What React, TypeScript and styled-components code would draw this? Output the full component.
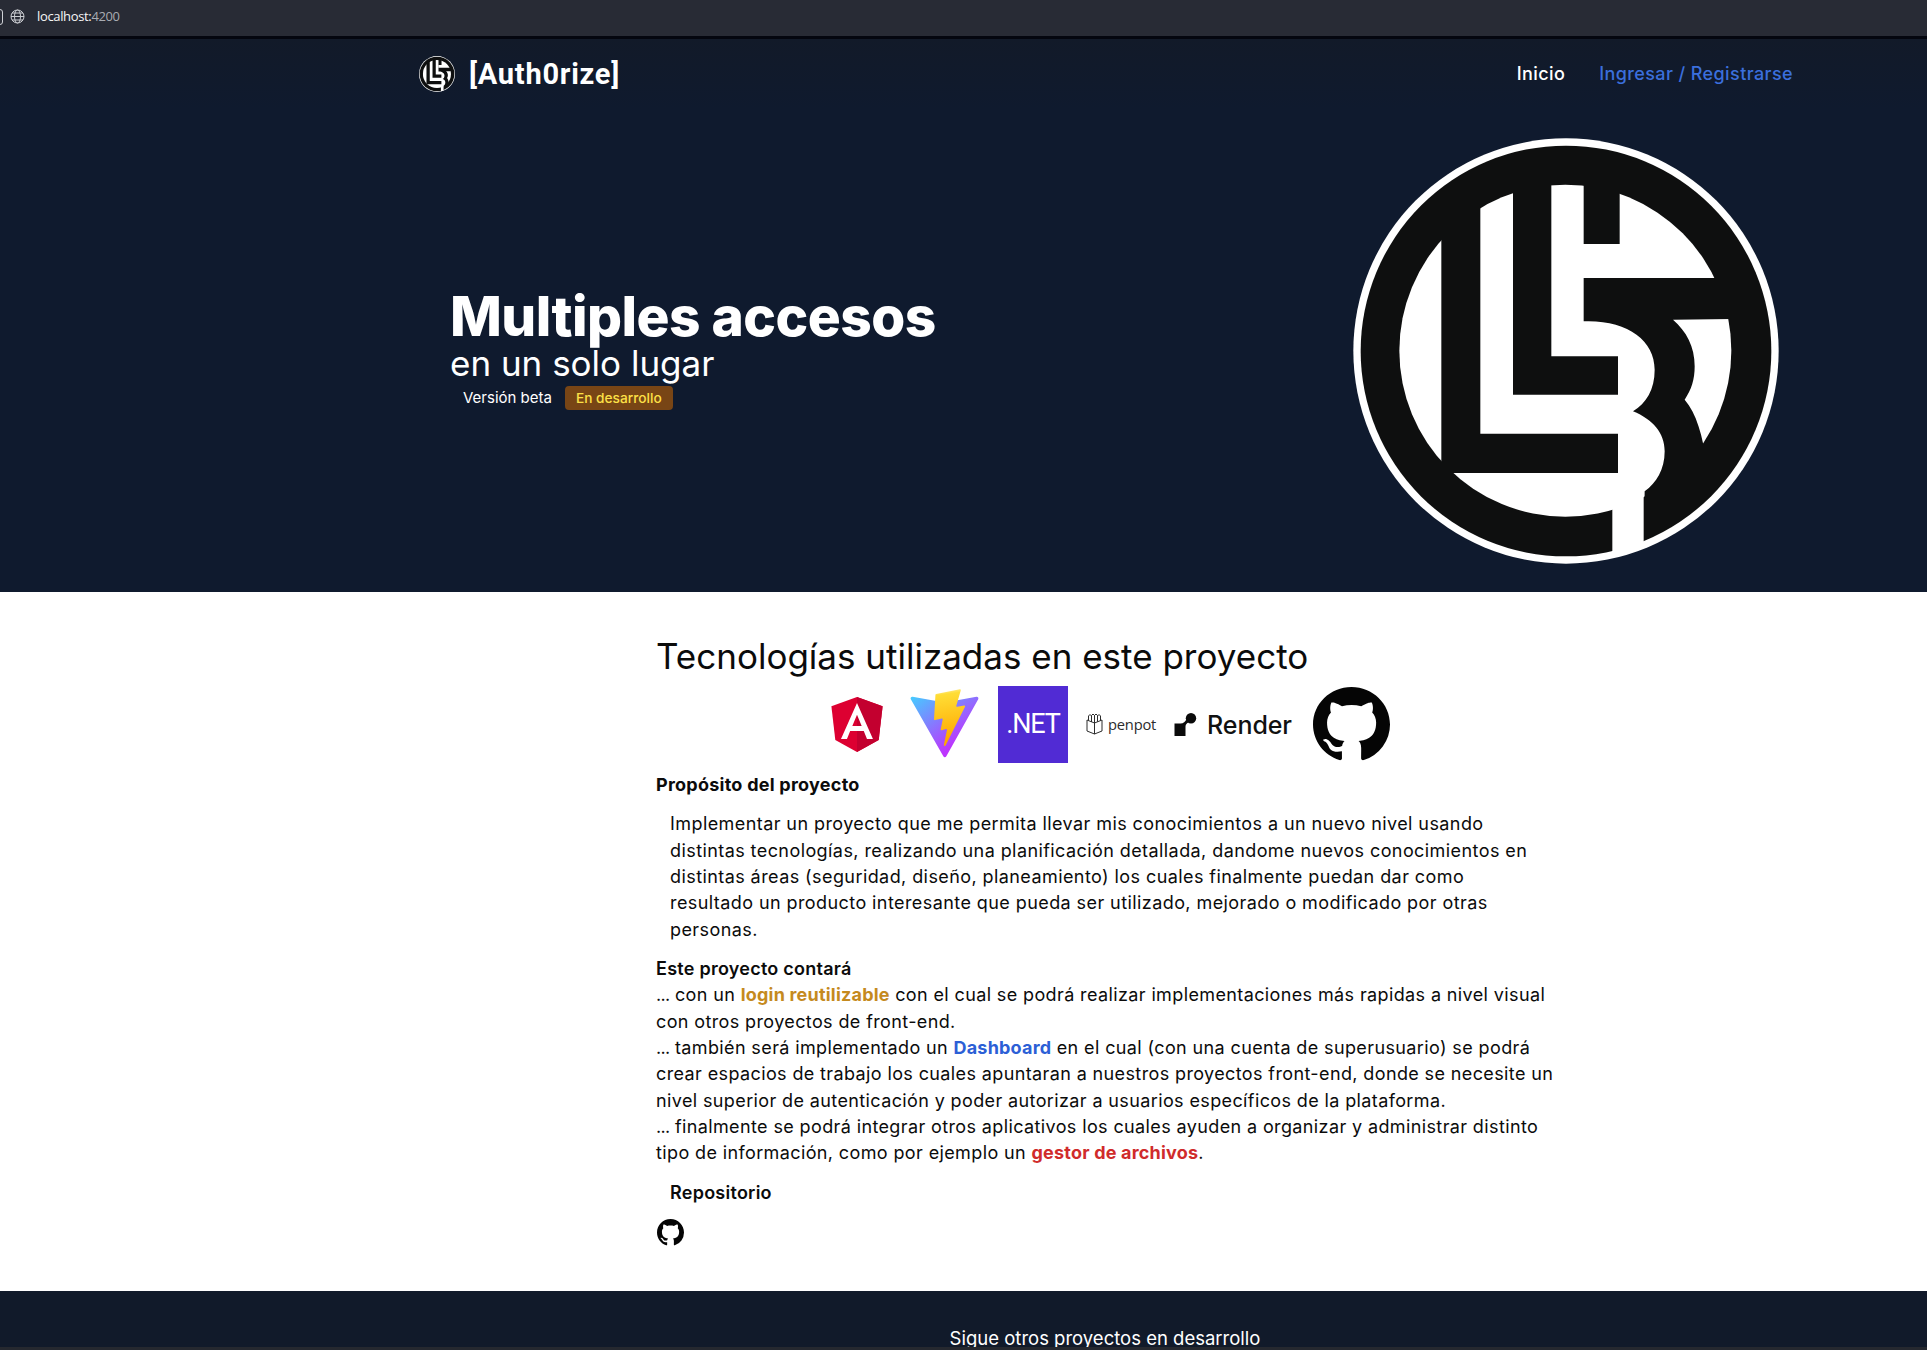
import React from "react";
import styled, { createGlobalStyle } from "styled-components";

const Global = createGlobalStyle`
  html, body { margin: 0; padding: 0; background: #fff; }
  body { font-family: Inter, "Noto Sans", "Liberation Sans", sans-serif; }
  * { box-sizing: border-box; }
`;

const Page = styled.div`
  height: 1350px;
  display: flex;
  flex-direction: column;
  overflow: hidden;
`;
const BrowserBar = styled.div`
  height: 39px;
  flex: none;
  display: flex;
  align-items: center;
  gap: 12px;
  padding: 0 0 4px 10px;
  background: #282b35;
  border-bottom: 3px solid #04060f;
  font: 400 13px "Open Sans", sans-serif;
  letter-spacing: -0.35px;
  color: #f6f6f6;
`;
const Port = styled.span`
  color: #a8abb2;
`;
const LeftEdge = styled.div`
  position: absolute;
  left: -6px;
  top: 9px;
  width: 9px;
  height: 16px;
  border: 1px solid #cfd1d6;
  border-radius: 3px;
`;
const Viewport = styled.div`
  flex: 1;
  min-height: 0;
  overflow: hidden;
`;
const Nav = styled.nav`
  height: 70px;
  background: linear-gradient(#121a29, #0f1a2e);
  display: flex;
  align-items: center;
  justify-content: space-between;
  padding: 0 134px 0 419px;
`;
const Brand = styled.div`
  display: flex;
  align-items: center;
  gap: 14px;
  color: #fff;
  font: 700 29px/1 Roboto, sans-serif;
  letter-spacing: 0.75px;
`;
const NavLinks = styled.div`
  display: flex;
  gap: 34px;
  margin-top: -2px;
`;
const NavLink = styled.a<{ $accent?: boolean }>`
  font-size: 18px;
  font-weight: 500;
  letter-spacing: 0.4px;
  color: ${(p) => (p.$accent ? "#3b6fdc" : "#ffffff")};
`;
const Hero = styled.section`
  height: 483px;
  background: #0f1a2e;
  display: flex;
  align-items: center;
  justify-content: space-between;
  padding: 0 148px 0 450px;
`;
const HeroText = styled.div`
  display: flex;
  flex-direction: column;
  margin-top: -6px;
  color: #fff;
`;
const HeroTitle = styled.h1`
  margin: 0;
  font-size: 55px;
  line-height: 60px;
  font-weight: 800;
  letter-spacing: -0.55px;
`;
const HeroSub = styled.div`
  font-size: 35px;
  line-height: 36px;
  font-weight: 400;
  letter-spacing: 0;
  margin-top: -1px;
`;
const HeroMeta = styled.div`
  display: flex;
  align-items: center;
  gap: 13px;
  padding-left: 13px;
  margin-top: 5px;
  font-size: 15px;
`;
const Badge = styled.span`
  display: inline-flex;
  align-items: center;
  height: 24px;
  padding: 0 11px;
  border-radius: 4px;
  background: #784515;
  color: #fde047;
  font-size: 13.7px;
  font-weight: 500;
`;
const Main = styled.main`
  height: 699px;
  background: #fff;
  color: #0b0b0b;
  padding: 41px 0 0 656px;
`;
const Column = styled.div`
  width: 905px;
`;
const Title = styled.h2`
  margin: 0;
  font-size: 35px;
  line-height: 46px;
  font-weight: 400;
  letter-spacing: 0;
`;
const LogoRow = styled.div`
  display: flex;
  align-items: center;
  gap: 18px;
  height: 78px;
  margin-top: 6px;
  margin-bottom: 9px;
  padding-left: 175px;
`;
const DotNet = styled.div`
  width: 70px;
  height: 77px;
  display: flex;
  align-items: center;
  justify-content: center;
  background: #512bd4;
  color: #fff;
  font: 400 27px Roboto, sans-serif;
  letter-spacing: -1.2px;
`;
const Penpot = styled.div`
  display: flex;
  align-items: center;
  gap: 5px;
  font: 400 14.7px "Open Sans", sans-serif;
  letter-spacing: -0.2px;
  color: #2c2c2c;
`;
const Render = styled.div`
  display: flex;
  align-items: center;
  gap: 10px;
  font: 500 25px Inter, sans-serif;
  letter-spacing: -0.1px;
  color: #111;
  margin-top: 1px;
`;
const GithubSlot = styled.div`
  margin-left: 3px;
  height: 75px;
`;
const Heading = styled.div<{ $indent?: boolean }>`
  font-size: 18px;
  line-height: 26.3px;
  font-weight: 700;
  letter-spacing: 0.25px;
  padding-left: ${(p) => (p.$indent ? "14px" : "0")};
`;
const Medium = styled(Heading)`
  font-weight: 600;
`;
const Para = styled.p<{ $indent?: boolean; $spacing: number; $gap?: number }>`
  margin: ${(p) => p.$gap ?? 0}px 0 0;
  font-size: 18px;
  line-height: 26.35px;
  letter-spacing: ${(p) => p.$spacing}px;
  white-space: nowrap;
  padding-left: ${(p) => (p.$indent ? "14px" : "0")};
`;
const Section = styled(Medium)<{ $gap: number }>`
  margin-top: ${(p) => p.$gap}px;
`;
const Mark = styled.b<{ $color: string }>`
  font-weight: 700;
  letter-spacing: 0.2px;
  color: ${(p) => p.$color};
`;
const Dots = styled.span`
  letter-spacing: -0.7px;
`;
const RepoIcon = styled.a`
  display: block;
  margin: 13px 0 0 1px;
  height: 27px;
`;
const Footer = styled.footer`
  height: 60px;
  background: #111a2a;
  color: #fff;
  padding: 35px 0 0 656px;
`;
const FooterText = styled.div`
  width: 898px;
  text-align: center;
  font-size: 18.5px;
  line-height: 24px;
`;
const BottomStrip = styled.div`
  height: 3px;
  flex: none;
  background: #25282f;
`;

const Logo = ({ size }: { size: number }) => (
  <svg width={size} height={size} viewBox="40 30 1278 1268" style={{ flex: "none" }}>
    <defs>
      <clipPath id={`inner${size}`}>
        <circle cx="677" cy="663" r="498" />
      </clipPath>
      <clipPath id={`outer${size}`}>
        <circle cx="679" cy="664" r="630" />
      </clipPath>
    </defs>
    <circle cx="679" cy="664" r="638" fill="#fff" />
    <circle cx="679" cy="664" r="616" fill="#0e0f0f" />
    <g clipPath={`url(#inner${size})`} fill="#fff">
      <rect x="170" y="100" width="135" height="1100" />
      <path d="M422 100H520V795H835V680H635V100H732V575C860 570 945 630 945 720C945 780 920 820 880 845C940 870 975 910 975 965C975 1020 950 1060 915 1085L912 1320H818V1200H300V1030H835V912H422Z" />
      <path d="M840 100V343H728V445H1300V100Z" />
      <path d="M1000 570L1300 567V1000H1100C1090 920 1070 850 1035 810C1055 780 1065 750 1065 710C1065 650 1040 605 1000 570Z" />
    </g>
    <rect x="818" y="1085" width="94" height="230" fill="#fff" clipPath={`url(#outer${size})`} />
  </svg>
);

const GithubMark = ({ w, h }: { w: number; h: number }) => (
  <svg width={w} height={h} viewBox="0 0 16 16" preserveAspectRatio="none" fill="#050505">
    <path d="M8 0C3.58 0 0 3.58 0 8c0 3.54 2.29 6.53 5.47 7.59.4.07.55-.17.55-.38 0-.19-.01-.82-.01-1.49-2.01.37-2.53-.49-2.69-.94-.09-.23-.48-.94-.82-1.13-.28-.15-.68-.52-.01-.53.63-.01 1.08.58 1.23.82.72 1.21 1.87.87 2.33.66.07-.52.28-.87.51-1.07-1.78-.2-3.64-.89-3.64-3.95 0-.87.31-1.59.82-2.15-.08-.2-.36-1.02.08-2.12 0 0 .67-.21 2.2.82.64-.18 1.32-.27 2-.27.68 0 1.36.09 2 .27 1.53-1.04 2.2-.82 2.2-.82.44 1.1.16 1.92.08 2.12.51.56.82 1.27.82 2.15 0 3.07-1.87 3.75-3.65 3.95.29.25.54.73.54 1.48 0 1.07-.01 1.93-.01 2.2 0 .21.15.46.55.38A8.013 8.013 0 0016 8c0-4.42-3.58-8-8-8z" />
  </svg>
);

const AngularSvg = styled.svg`
  margin-right: 8px;
`;
const Angular = () => (
  <AngularSvg width="52" height="55" viewBox="31 30 188 200">
    <polygon points="125,30 31.9,63.2 46.1,186.3 125,230 203.9,186.3 218.1,63.2" fill="#DD0031" />
    <polygon points="125,30 125,230 203.9,186.3 218.1,63.2" fill="#C3002F" />
    <path
      d="M125 52.1L66.8 182.6h21.7l11.7-29.2h49.4l11.7 29.2h21.7L125 52.1zM142 135.4H108l17-40.9L142 135.4z"
      fill="#fff"
    />
  </AngularSvg>
);

const Vite = () => (
  <svg width="71" height="70" viewBox="0 0 410 404">
    <defs>
      <linearGradient id="va" x1="6" y1="33" x2="235" y2="344" gradientUnits="userSpaceOnUse">
        <stop stopColor="#41D1FF" />
        <stop offset="1" stopColor="#BD34FE" />
      </linearGradient>
      <linearGradient id="vb" x1="194.651" y1="8.818" x2="236.076" y2="292.989" gradientUnits="userSpaceOnUse">
        <stop stopColor="#FFEA83" />
        <stop offset="0.0833" stopColor="#FFDD35" />
        <stop offset="1" stopColor="#FFA800" />
      </linearGradient>
    </defs>
    <path
      d="M399.641 59.5246L215.643 388.545C211.844 395.338 202.084 395.378 198.228 388.618L10.5817 59.5563C6.38087 52.1896 12.6802 43.2665 21.0281 44.7586L205.223 77.6824C206.398 77.8924 207.601 77.8904 208.776 77.6763L389.119 44.8058C397.439 43.2894 403.768 52.1434 399.641 59.5246Z"
      fill="url(#va)"
    />
    <path
      d="M292.965 1.5744L156.801 28.2552C154.563 28.6937 152.906 30.5903 152.771 32.8664L144.395 174.33C144.198 177.662 147.258 180.248 150.51 179.498L188.42 170.749C191.967 169.931 195.172 173.055 194.443 176.622L183.18 231.775C182.422 235.487 185.907 238.661 189.532 237.56L212.947 230.446C216.577 229.344 220.065 232.527 219.297 236.242L201.398 322.875C200.278 328.294 207.486 331.249 210.492 326.603L212.5 323.5L323.454 102.072C325.312 98.3645 322.108 94.137 318.036 94.9228L279.014 102.454C275.347 103.161 272.227 99.746 273.262 96.1583L298.731 7.86689C299.767 4.27314 296.636 0.855181 292.965 1.5744Z"
      fill="url(#vb)"
    />
  </svg>
);

const PenpotBox = () => (
  <svg width="17" height="22" viewBox="0 0 17 22" fill="none" stroke="#2c2c2c" strokeWidth="1">
    <path d="M1 7L8.5 10V21L1 18ZM16 7L8.5 10V21L16 18Z" />
    <path d="M2.5 7.5V3L4 1.5L5.5 3V9M5.5 8.5V2.5L7 1L8.5 2.5V10M8.5 10V2.5L10 1L11.5 2.5V8.5M11.5 8.5V3L13 1.5L14.5 3V7.5" />
  </svg>
);

const RenderMark = () => (
  <svg width="23" height="23" viewBox="0 0 22 23" fill="#0a0a0a">
    <circle cx="16.5" cy="5.2" r="5.2" />
    <path d="M0 10.5H6C9 10.5 10.8 8.8 11.8 6.5L14 9.5C12.5 10 11 11.5 11 13.5V23H0Z" />
  </svg>
);

const Globe = () => (
  <svg width="15" height="15" viewBox="0 0 15 15" fill="none" stroke="#c9cbd0" strokeWidth="1">
    <circle cx="7.5" cy="7.5" r="6.5" />
    <ellipse cx="7.5" cy="7.5" rx="3" ry="6.5" />
    <path d="M1 7.5H14M2 4H13M2 11H13" />
  </svg>
);

export default function App() {
  return (
    <Page>
      <Global />
      <BrowserBar>
        <LeftEdge />
        <Globe />
        <span>
          localhost:<Port>4200</Port>
        </span>
      </BrowserBar>
      <Viewport>
        <Nav>
          <Brand>
            <Logo size={36} />
            [Auth0rize]
          </Brand>
          <NavLinks>
            <NavLink>Inicio</NavLink>
            <NavLink $accent>Ingresar / Registrarse</NavLink>
          </NavLinks>
        </Nav>
        <Hero>
          <HeroText>
            <HeroTitle>Multiples accesos</HeroTitle>
            <HeroSub>en un solo lugar</HeroSub>
            <HeroMeta>
              Versión beta
              <Badge>En desarrollo</Badge>
            </HeroMeta>
          </HeroText>
          <Logo size={426} />
        </Hero>
        <Main>
          <Column>
            <Title>Tecnologías utilizadas en este proyecto</Title>
            <LogoRow>
              <Angular />
              <Vite />
              <DotNet>.NET</DotNet>
              <Penpot>
                <PenpotBox />
                penpot
              </Penpot>
              <Render>
                <RenderMark />
                Render
              </Render>
              <GithubSlot>
                <GithubMark w={77} h={75} />
              </GithubSlot>
            </LogoRow>
            <Heading>Propósito del proyecto</Heading>
            <Para $indent $spacing={0.42} $gap={13}>
              Implementar un proyecto que me permita llevar mis conocimientos a un nuevo nivel usando
              <br />
              distintas tecnologías, realizando una planificación detallada, dandome nuevos conocimientos en
              <br />
              distintas áreas (seguridad, diseño, planeamiento) los cuales finalmente puedan dar como
              <br />
              resultado un producto interesante que pueda ser utilizado, mejorado o modificado por otras
              <br />
              personas.
            </Para>
            <Section $gap={13}>Este proyecto contará</Section>
            <Para $spacing={0.38}>
              <Dots>...</Dots> con un <Mark $color="#c58a1e">login reutilizable</Mark> con el cual se podrá realizar implementaciones más rapidas a nivel visual
              <br />
              con otros proyectos de front-end.
              <br />
              <Dots>...</Dots> también será implementado un <Mark $color="#2c5fd6">Dashboard</Mark> en el cual (con una cuenta de superusuario) se podrá
              <br />
              crear espacios de trabajo los cuales apuntaran a nuestros proyectos front-end, donde se necesite un
              <br />
              nivel superior de autenticación y poder autorizar a usuarios específicos de la plataforma.
              <br />
              <Dots>...</Dots> finalmente se podrá integrar otros aplicativos los cuales ayuden a organizar y administrar distinto
              <br />
              tipo de información, como por ejemplo un <Mark $color="#d02b2b">gestor de archivos</Mark>.
            </Para>
            <Section $indent $gap={13}>Repositorio</Section>
            <RepoIcon>
              <GithubMark w={27} h={27} />
            </RepoIcon>
          </Column>
        </Main>
        <Footer>
          <FooterText>Sigue otros proyectos en desarrollo</FooterText>
        </Footer>
      </Viewport>
      <BottomStrip />
    </Page>
  );
}
